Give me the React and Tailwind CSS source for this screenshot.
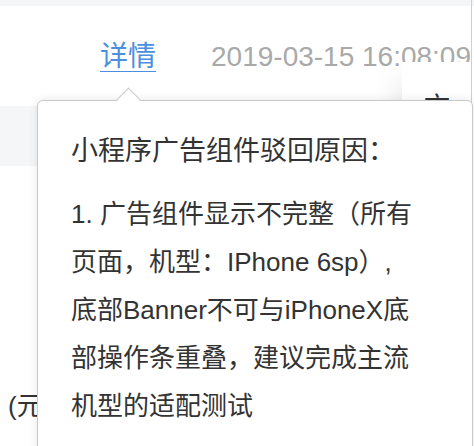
export default function App() {
  const lines = [
    "1. 广告组件显示不完整（所有",
    "页面，机型：IPhone 6sp）,",
    "底部Banner不可与iPhoneX底",
    "部操作条重叠，建议完成主流",
    "机型的适配测试",
  ];

  return (
    <div className="relative w-[474px] h-[446px] overflow-hidden bg-white font-['Liberation_Sans','Noto_Sans_CJK_SC',sans-serif]">
      {/* top strip */}
      <div className="h-[6px] bg-[#f5f6f8]" />

      {/* row: link + time */}
      <div className="flex items-center h-[100px] pt-[2px] pl-[100px] gap-[55px] whitespace-nowrap">
        <a className="text-[28px] leading-none text-[#4a8fe0] underline underline-offset-[5px] decoration-1">
          详情
        </a>
        <span className="text-[28px] leading-none text-[#a9a9a9]">2019-03-15 16:08:09</span>
      </div>

      {/* hovered table row */}
      <div className="h-[60px] bg-[#f5f6f8]" />

      {/* next rows */}
      <div className="pt-[220px] pl-[8px] text-[26px] leading-[40px] text-[#333] whitespace-nowrap">
        (元)
      </div>

      {/* fixed right column */}
      <div className="absolute left-[402px] top-[62px] right-0 bottom-0 bg-white shadow-[-24px_0_24px_-16px_rgba(0,0,0,0.07)]">
        <div className="pt-[32px] pl-[22px] text-[26px] leading-none text-[#333]">文</div>
      </div>

      {/* right edge line */}
      <div className="absolute top-0 bottom-0 left-[471px] w-px bg-[#cfcfd3]" />

      {/* tooltip */}
      <div className="absolute left-[37px] top-[100px] w-[436px] h-[370px] bg-white border border-[#c9c9cd] rounded-[6px] shadow-[0_0_10px_rgba(0,0,0,0.1)]">
        <div className="absolute left-[82px] -top-[10px] w-[17px] h-[17px] rotate-45 bg-white border-l border-t border-[#c9c9cd]" />
        <div className="relative pl-[33px] pt-[26px] text-[#333] whitespace-nowrap">
          <div className="text-[27px] leading-[48px]">小程序广告组件驳回原因：</div>
          <div className="mt-[15px] text-[26px] leading-[48px]">
            {lines.map((l) => (
              <div key={l}>{l}</div>
            ))}
          </div>
        </div>
      </div>
    </div>
  );
}
